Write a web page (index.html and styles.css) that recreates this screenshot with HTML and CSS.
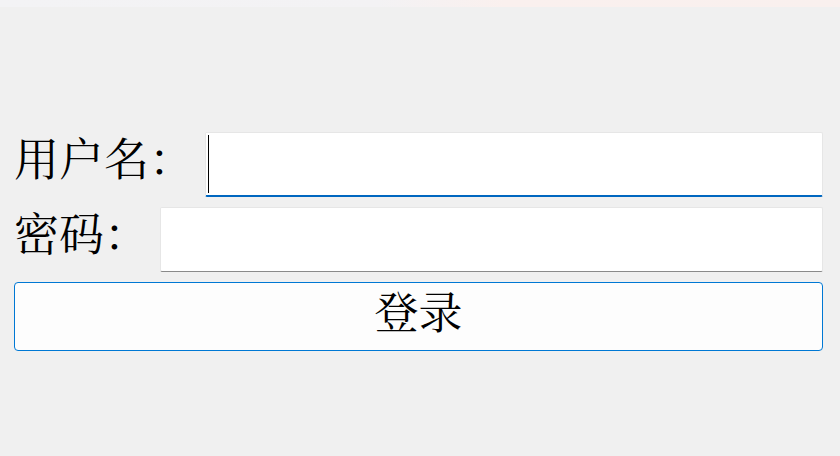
FILE: index.html
```html
<!DOCTYPE html>
<html lang="zh-CN">
<head>
<meta charset="utf-8">
<title>登录</title>
<link rel="stylesheet" href="styles.css">
</head>
<body>
<div class="titlebar"></div>
<main class="form">
  <div class="row">
    <span class="label">用户名：</span>
    <div class="field focused"><span class="caret"></span></div>
  </div>
  <div class="row">
    <span class="label">密码：</span>
    <div class="field"></div>
  </div>
  <button class="btn">登录</button>
</main>
</body>
</html>
```
FILE: styles.css
```css
html, body {
  margin: 0;
  padding: 0;
  width: 840px;
  height: 456px;
  overflow: hidden;
  background: #f0f0f0;
  font-family: "Noto Serif CJK SC", "Noto Sans CJK SC", serif;
}
.titlebar {
  height: 7px;
  background: linear-gradient(90deg, #f3f3f5 0%, #f3f2f4 45%, #faf0ee 60%, #f9f0ee 100%);
}
.form {
  display: flex;
  flex-direction: column;
  gap: 10px;
  padding: 125px 17px 0 14px;
}
.row {
  display: flex;
  align-items: center;
  height: 65px;
}
.label {
  font-size: 45px;
  line-height: 1;
  color: #000;
  margin-right: 11px;
  margin-top: -16px;
  white-space: nowrap;
}
.field {
  flex: 1;
  height: 65px;
  box-sizing: border-box;
  background: #fff;
  border: 1px solid #e6e6e6;
  border-bottom: 1px solid #8a8a8a;
  border-radius: 2px;
  display: flex;
  align-items: center;
  padding-left: 2px;
}
.field.focused {
  border-bottom: 2px solid #0067c0;
}
.caret {
  width: 1px;
  height: 58px;
  background: #000;
}
.btn {
  height: 69px;
  box-sizing: border-box;
  background: #fdfdfd;
  border: 1px solid #0078d4;
  border-radius: 4px;
  font-family: "Noto Serif CJK SC", "Noto Sans CJK SC", serif;
  font-size: 44px;
  line-height: 1;
  color: #000;
  padding: 0 0 14px 0;
  margin: 0;
}
```
